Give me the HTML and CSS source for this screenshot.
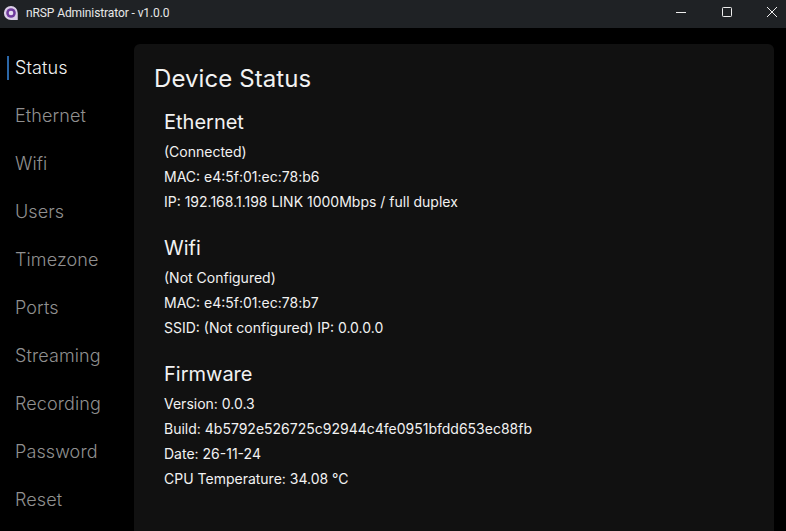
FILE: index.html
```html
<!DOCTYPE html>
<html lang="en">
<head>
<meta charset="utf-8">
<title>nRSP Administrator</title>
<link rel="stylesheet" href="styles.css">
</head>
<body>
<header class="titlebar">
  <div class="app">
    <svg class="logo" width="16" height="16" viewBox="0 0 18 18"><path d="M9 1a8 8 0 1 0 0 16h7.6V9A8 8 0 0 0 9 1z" fill="#dccfe8"/><circle cx="9" cy="9" r="5.4" fill="#6f3a9c"/><circle cx="9" cy="9" r="2.6" fill="#e6def0"/></svg>
    <span class="app-title">nRSP Administrator - v1.0.0</span>
  </div>
  <div class="controls">
    <span class="ctl"><svg width="12" height="12" viewBox="0 0 12 12"><path d="M1 6.5h10" stroke="#eee" stroke-width="1"/></svg></span>
    <span class="ctl"><svg width="12" height="12" viewBox="0 0 12 12"><rect x="1.5" y="1.5" width="9" height="9" rx=".8" fill="none" stroke="#eee" stroke-width="1"/></svg></span>
    <span class="ctl"><svg width="12" height="12" viewBox="0 0 12 12"><path d="M1 1l10 10M11 1L1 11" stroke="#eee" stroke-width="1"/></svg></span>
  </div>
</header>
<div class="main">
  <nav class="nav">
    <a class="nav-item active">Status</a>
    <a class="nav-item">Ethernet</a>
    <a class="nav-item">Wifi</a>
    <a class="nav-item">Users</a>
    <a class="nav-item">Timezone</a>
    <a class="nav-item">Ports</a>
    <a class="nav-item">Streaming</a>
    <a class="nav-item">Recording</a>
    <a class="nav-item">Password</a>
    <a class="nav-item">Reset</a>
  </nav>
  <main class="panel">
    <h1>Device Status</h1>
    <section class="group">
      <h2>Ethernet</h2>
      <p>(Connected)</p>
      <p>MAC: e4:5f:01:ec:78:b6</p>
      <p>IP: 192.168.1.198 LINK 1000Mbps / full duplex</p>
    </section>
    <section class="group">
      <h2>Wifi</h2>
      <p>(Not Configured)</p>
      <p>MAC: e4:5f:01:ec:78:b7</p>
      <p>SSID: (Not configured) IP: 0.0.0.0</p>
    </section>
    <section class="group">
      <h2>Firmware</h2>
      <p>Version: 0.0.3</p>
      <p>Build: 4b5792e526725c92944c4fe0951bfdd653ec88fb</p>
      <p>Date: 26-11-24</p>
      <p>CPU Temperature: 34.08 °C</p>
    </section>
  </main>
</div>
</body>
</html>
```
FILE: styles.css
```css
* { box-sizing: border-box; }
html, body { height: 100%; }
body {
  margin: 0;
  background: #000;
  color: #f2f2f2;
  font-family: Inter, "Liberation Sans", sans-serif;
  display: flex;
  flex-direction: column;
  overflow: hidden;
}
.titlebar {
  height: 28px;
  flex: none;
  background: #1f2225;
  display: flex;
  justify-content: space-between;
  align-items: flex-start;
}
.app { display: flex; align-items: center; gap: 7px; padding-left: 3px; height: 26px; }
.logo { display: block; }
.app-title { font: 12px Roboto, "Liberation Sans", sans-serif; letter-spacing: -0.1px; color: #e8e8e8; }
.controls { display: flex; height: 24px; margin-right: -9px; }
.ctl { width: 45.5px; display: flex; align-items: center; justify-content: center; }
.main { flex: 1; display: flex; min-height: 0; padding-top: 16px; padding-right: 12px; }
.nav { width: 134px; flex: none; display: flex; flex-direction: column; padding-left: 7px; }
.nav-item {
  height: 48px;
  padding-left: 8px;
  font-size: 18px;
  font-weight: 300;
  line-height: 48px;
  letter-spacing: 0.1px;
  color: #909090;
  position: relative;
}
.nav-item.active { color: #f2f2f2; }
.nav-item.active::before {
  content: "";
  position: absolute;
  left: 0;
  top: 12px;
  height: 24px;
  width: 2px;
  background: #2b67a8;
}
.panel {
  flex: 1;
  background: #111111;
  border-radius: 6px 6px 0 0;
  padding: 20px 20px 0;
}
h1 { margin: 0 0 15px; font-size: 24px; font-weight: 400; line-height: 30px; letter-spacing: 0.08px; }
.group { padding-left: 10px; margin-bottom: 21px; }
h2 { margin: 0 0 4px; font-size: 20px; font-weight: 400; line-height: 26px; }
p { margin: 0; font-size: 14px; line-height: 25px; }
```
